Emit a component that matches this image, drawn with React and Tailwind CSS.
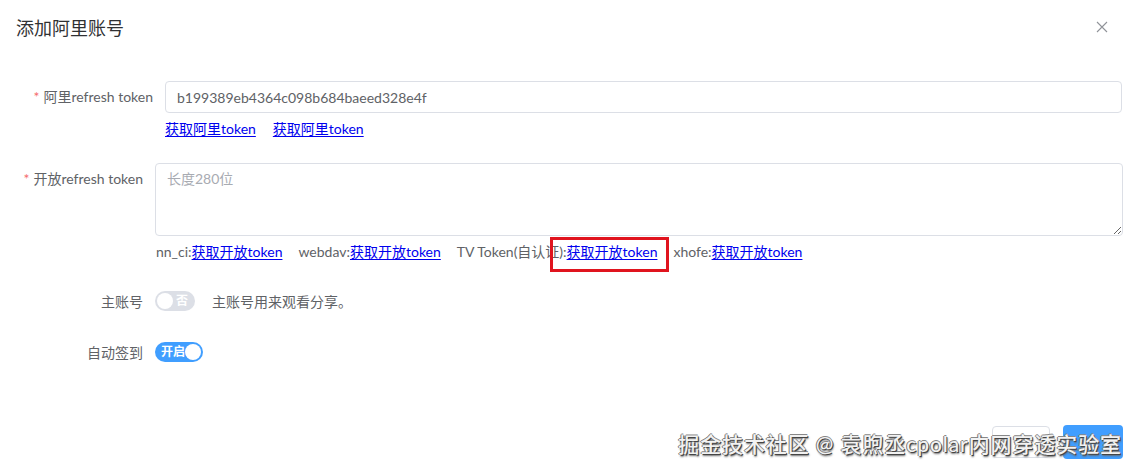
import { useState } from 'react'

const linkCls = 'text-[#0000ee] underline underline-offset-2'

const Switch = ({ on, onText, offText, onChange }) => (
  <button
    type="button"
    onClick={onChange}
    className={`relative flex h-5 items-center rounded-full transition ${on ? 'w-12 bg-[#409eff]' : 'w-10 bg-[#dcdfe6]'}`}
  >
    {on ? (
      <>
        <span className="pl-[6px] text-[12px] font-bold leading-none text-white">{onText}</span>
        <span className="absolute right-[2px] top-[2px] h-4 w-4 rounded-full bg-white" />
      </>
    ) : (
      <>
        <span className="absolute left-[2px] top-[2px] h-4 w-4 rounded-full bg-white" />
        <span className="ml-auto pr-[7px] text-[12px] font-bold leading-none text-white">{offText}</span>
      </>
    )}
  </button>
)

const App = () => {
  const [aliToken, setAliToken] = useState('b199389eb4364c098b684baeed328e4f')
  const [openToken, setOpenToken] = useState('')
  const [isMain, setIsMain] = useState(false)
  const [autoSign, setAutoSign] = useState(true)

  const openLinks = ['nn_ci:', 'webdav:', 'TV Token(自认证):', 'xhofe:']

  return (
    <div className="relative h-[471px] w-[1140px] overflow-hidden bg-white font-['Lato','Noto_Sans_CJK_SC',sans-serif] text-[14px] text-[#606266]">
      {/* 标题 */}
      <div className="flex items-center justify-between pl-4 pr-8 pt-4">
        <h2 className="text-[18px] leading-6 text-[#303133]">添加阿里账号</h2>
        <svg width="12" height="12" viewBox="0 0 12 12" className="mb-[2px] text-[#909399]">
          <path d="M1 1L11 11M11 1L1 11" stroke="currentColor" strokeWidth="1.1" />
        </svg>
      </div>

      <div className="mt-[41px]">
        {/* 阿里refresh token */}
        <div className="flex">
          <label className="w-[165px] shrink-0 pr-3 text-right leading-8">
            <span className="mr-1 text-[#f56c6c]">*</span>阿里refresh token
          </label>
          <div className="mr-[18px] flex-1">
            <input
              value={aliToken}
              onChange={(e) => setAliToken(e.target.value)}
              className="h-8 w-full rounded-[4px] border border-[#dcdfe6] px-[11px] text-[14px] text-[#606266] outline-none"
            />
            <div className="mt-1 flex gap-[17px] leading-6">
              <a href="#" className={linkCls}>获取阿里token</a>
              <a href="#" className={linkCls}>获取阿里token</a>
            </div>
          </div>
        </div>

        {/* 开放refresh token */}
        <div className="mt-[22px] flex">
          <label className="w-[155px] shrink-0 pr-3 text-right leading-8">
            <span className="mr-1 text-[#f56c6c]">*</span>开放refresh token
          </label>
          <div className="relative mr-[17px] flex-1">
            <textarea
              value={openToken}
              onChange={(e) => setOpenToken(e.target.value)}
              placeholder="长度280位"
              className="block h-[73px] w-full rounded-[4px] border border-[#dcdfe6] px-[11px] py-[4px] text-[14px] leading-[21px] text-[#606266] outline-none placeholder:text-[#a8abb2]"
            />
            <div className="mt-1 flex gap-4 pl-px leading-6">
              {openLinks.map((p) => (
                <span key={p}>
                  {p}
                  <a href="#" className={linkCls}>获取开放token</a>
                </span>
              ))}
            </div>
            {/* 标注框 */}
            <span className="pointer-events-none absolute left-[395px] top-[74px] h-[35px] w-[119px] border-[3px] border-[#e0141e]" />
          </div>
        </div>

        {/* 主账号 */}
        <div className="mt-[21px] flex h-8 items-center">
          <label className="w-[155px] shrink-0 pr-3 text-right">主账号</label>
          <Switch on={isMain} onText="是" offText="否" onChange={() => setIsMain(!isMain)} />
          <span className="ml-[17px]">主账号用来观看分享。</span>
        </div>

        {/* 自动签到 */}
        <div className="mt-[19px] flex h-8 items-center">
          <label className="w-[155px] shrink-0 pr-3 text-right">自动签到</label>
          <Switch on={autoSign} onText="开启" offText="关闭" onChange={() => setAutoSign(!autoSign)} />
        </div>
      </div>

      {/* 底部按钮 */}
      <div className="absolute bottom-[12px] right-[17px] flex items-center gap-[13px]">
        <button className="h-8 w-[58px] rounded-[4px] border border-[#dcdfe6] bg-white" />
        <button className="h-[34px] w-[60px] rounded-[4px] bg-[#409eff]" />
      </div>

      {/* 水印 */}
      <div className="pointer-events-none absolute bottom-[17px] right-[18px] text-[21px] font-medium leading-none tracking-[0.9px] text-[#f2f2f2] [text-shadow:1px_1px_0_#444,-1px_0_0_#777,0_-1px_0_#888,1px_2px_2px_#666]">
        掘金技术社区 @ 袁煦丞cpolar内网穿透实验室
      </div>
    </div>
  )
}

export default App
